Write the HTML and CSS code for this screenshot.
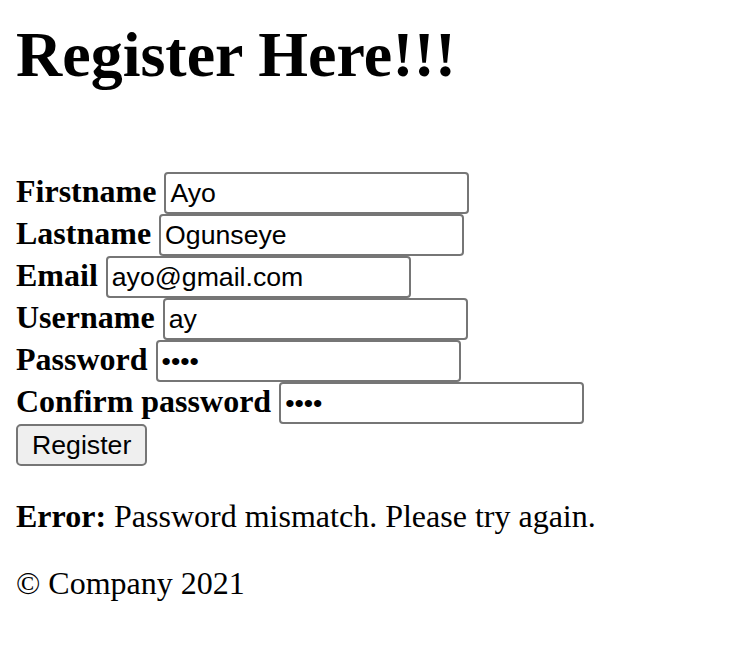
FILE: index.html
```html
<!DOCTYPE html>
<html lang="en">
<head>
<meta charset="utf-8">
<title>Register</title>
<link rel="stylesheet" href="styles.css">
</head>
<body>
<h1 class="title">Register Here!!!</h1>
<form class="form">
  <div class="row"><label class="label" for="fn">Firstname</label><input class="field" id="fn" type="text" value="Ayo"></div>
  <div class="row"><label class="label" for="ln">Lastname</label><input class="field" id="ln" type="text" value="Ogunseye"></div>
  <div class="row"><label class="label" for="em">Email</label><input class="field" id="em" type="text" value="ayo@gmail.com"></div>
  <div class="row"><label class="label" for="un">Username</label><input class="field" id="un" type="text" value="ay"></div>
  <div class="row"><label class="label" for="pw">Password</label><input class="field" id="pw" type="password" value="abcd"></div>
  <div class="row"><label class="label" for="cpw">Confirm password</label><input class="field" id="cpw" type="password" value="abcd"></div>
  <div class="row"><button class="btn" type="button">Register</button></div>
</form>
<p class="error"><b>Error:</b> Password mismatch. Please try again.</p>
<p class="footer">© Company 2021</p>
</body>
</html>
```

FILE: styles.css
```css
html, body {
  margin: 0;
  padding: 0;
  background: #ffffff;
}
body {
  padding: 0 16px;
  font-family: "Liberation Serif", "Times New Roman", serif;
  font-size: 32px;
  color: #000000;
}
.title {
  font-size: 64px;
  font-weight: bold;
  line-height: normal;
  margin: 18px 0 0 0;
}
.form {
  margin: 80px 0 0 0;
}
.row {
  display: flex;
  align-items: baseline;
  gap: 8px;
  height: 42px;
}
.label {
  font-weight: bold;
  white-space: nowrap;
}
.field {
  box-sizing: border-box;
  width: 305px;
  height: 42px;
  margin: 0;
  padding: 0 4px;
  border: 2px solid #767676;
  border-radius: 4px;
  font-family: "Liberation Sans", Arial, sans-serif;
  font-size: 26.67px;
  color: #000000;
  background: #ffffff;
}
.btn {
  box-sizing: border-box;
  height: 42px;
  margin: 0;
  padding: 0 14px;
  border: 2px solid #767676;
  border-radius: 5px;
  background: #efefef;
  font-family: "Liberation Sans", Arial, sans-serif;
  font-size: 26.67px;
  color: #000000;
}
.error {
  margin: 32px 0 0 0;
}
.footer {
  margin: 30px 0 0 0;
}
```
